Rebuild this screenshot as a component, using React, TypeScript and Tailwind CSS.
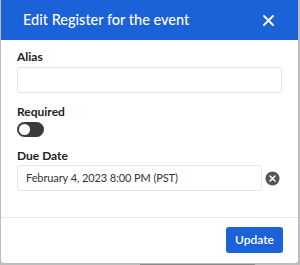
export default function App() {
  return (
    <div className="h-[265px] w-[300px] overflow-hidden bg-[#bdbdbd] font-['Lato',sans-serif]">
      <div className="ml-px flex h-[263px] w-[297px] flex-col overflow-hidden rounded-b-[3px] bg-white">
        {/* Header */}
        <div className="flex h-[40px] shrink-0 items-center justify-between bg-[#1b61d7] pl-[22px] pr-[24px]">
          <h1 className="text-[14.5px] font-medium text-white">Edit Register for the event</h1>
          <svg width="11" height="11" viewBox="0 0 11 11" className="text-white">
            <path d="M1 1L10 10M10 1L1 10" stroke="currentColor" strokeWidth="1.8" strokeLinecap="round" />
          </svg>
        </div>

        {/* Body */}
        <div className="flex flex-col px-[16px] pt-[10px]">
          <label className="text-[12px] font-bold leading-[14px] text-[#222]">Alias</label>
          <input className="mt-[3px] h-[26px] w-[265px] rounded-[3px] border border-[#e6e6e6] px-2 text-[12px] outline-none" />

          <label className="mt-[12px] text-[12px] font-bold leading-[14px] text-[#222]">Required</label>
          <div className="mt-[3px] flex h-[15px] w-[27px] items-center rounded-full bg-[#3b3b3b] px-[2px]">
            <div className="h-[11px] w-[11px] rounded-full bg-white" />
          </div>

          <label className="mt-[12px] text-[12px] font-bold leading-[14px] text-[#222]">Due Date</label>
          <div className="mt-[2px] flex items-center">
            <div className="flex h-[26px] w-[245px] items-center rounded-[3px] border border-[#e6e6e6] pl-[8px] text-[11px] tracking-[-0.1px] text-[#333]">
              February 4, 2023 8:00 PM (PST)
            </div>
            <svg width="15" height="15" viewBox="0 0 15 15" className="ml-[3px]">
              <circle cx="7.5" cy="7.5" r="7" fill="#555" />
              <path d="M5 5L10 10M10 5L5 10" stroke="white" strokeWidth="1.6" strokeLinecap="round" />
            </svg>
          </div>
        </div>

        {/* Footer */}
        <div className="mt-auto flex h-[46px] items-start justify-end border-t border-[#e8e8e8] pr-[15px] pt-[9px]">
          <button className="h-[26px] w-[57px] rounded-[3px] bg-[#1b61d7] text-[12px] font-semibold text-white">
            Update
          </button>
        </div>
      </div>
      <div className="ml-[140px] mt-px h-px w-[115px] bg-[#8a8a8a]" />
    </div>
  );
}
